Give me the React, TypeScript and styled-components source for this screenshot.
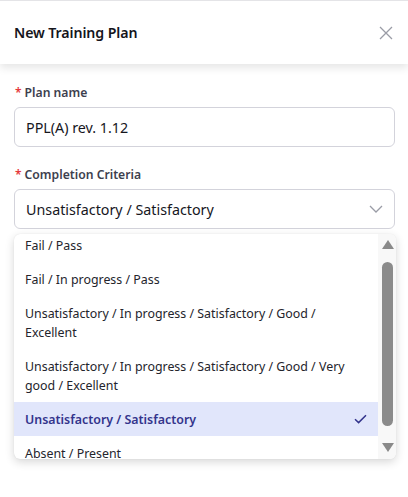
import { useLayoutEffect, useRef } from 'react'
import styled, { createGlobalStyle } from 'styled-components'

const GlobalStyle = createGlobalStyle`
  html, body {
    margin: 0;
    padding: 0;
    background: #fff;
  }
  body {
    font-family: "Segoe UI", "Noto Sans", "Open Sans", sans-serif;
    color: #1b1b1f;
  }
`

const Page = styled.div`
  width: 408px;
  height: 497px;
  background: #fff;
  overflow: hidden;
`

const Header = styled.header`
  height: 63px;
  border-top: 1px solid #e4e4e7;
  padding: 0 14px;
  display: flex;
  align-items: center;
  justify-content: space-between;
  background: #fff;
  box-shadow: 0 4px 8px rgba(0, 0, 0, 0.1);
  position: relative;
`

const Title = styled.h1`
  margin: 0;
  font-size: 14.2px;
  font-weight: 600;
  color: #15151c;
  letter-spacing: -0.1px;
`

const CloseBtn = styled.button`
  border: 0;
  background: none;
  padding: 0;
  width: 16px;
  height: 16px;
  display: flex;
  align-items: center;
  justify-content: center;
  cursor: pointer;
`

const Form = styled.div`
  padding: 20px 13px 0 14px;
  display: flex;
  flex-direction: column;
`

const Field = styled.div<{ $gap?: number }>`
  display: flex;
  flex-direction: column;
  gap: 5px;
  margin-bottom: ${p => p.$gap ?? 0}px;
`

const Label = styled.label`
  display: flex;
  align-items: center;
  gap: 3px;
  font-size: 12.2px;
  font-weight: 600;
  line-height: 18px;
  color: #3d3f4e;
`

const Star = styled.span`
  color: #e5383b;
  font-size: 12px;
  margin-left: 1px;
`

const Input = styled.div`
  height: 40px;
  box-sizing: border-box;
  border: 1px solid #d3d3db;
  border-radius: 6px;
  padding: 0 11px;
  display: flex;
  align-items: center;
  justify-content: space-between;
  font-size: 14.3px;
  color: #16161d;
`

const Dropdown = styled.div`
  margin-top: 5px;
  margin-right: -1px;
  height: 225px;
  display: flex;
  border-radius: 6px;
  background: #fff;
  box-shadow: 0 3px 10px rgba(0, 0, 0, 0.16), 0 0 1px rgba(0, 0, 0, 0.12);
  overflow: hidden;
`

const List = styled.ul`
  flex: 1;
  margin: 0;
  padding: 0;
  list-style: none;
  overflow: hidden;
`

const Item = styled.li<{ $selected?: boolean }>`
  padding: 7.5px 11px;
  display: flex;
  align-items: center;
  justify-content: space-between;
  gap: 12px;
  font-size: 12.4px;
  line-height: 19px;
  color: ${p => (p.$selected ? '#33348c' : '#24242c')};
  font-weight: ${p => (p.$selected ? 600 : 400)};
  background: ${p => (p.$selected ? '#e1e6fb' : 'transparent')};
`

const ItemText = styled.span`
  max-width: 332px;
`

const ScrollTrack = styled.div`
  width: 18px;
  background: #f8f8f8;
  display: flex;
  flex-direction: column;
  align-items: center;
  padding: 6px 0 6px;
  box-sizing: border-box;
`

const Arrow = styled.div<{ $down?: boolean }>`
  width: 0;
  height: 0;
  border-left: 6.5px solid transparent;
  border-right: 6.5px solid transparent;
  ${p =>
    p.$down
      ? 'border-top: 9px solid #8a8a8a;'
      : 'border-bottom: 9px solid #8a8a8a;'}
  margin-left: 1px;
`

const Thumb = styled.div`
  width: 11px;
  height: 164px;
  margin: 13px 0 17px 1px;
  border-radius: 6px;
  background: #8b8b8b;
`

const options = [
  'Fail / Pass',
  'Fail / In progress / Pass',
  'Unsatisfactory / In progress / Satisfactory / Good / Excellent',
  'Unsatisfactory / In progress / Satisfactory / Good / Very good / Excellent',
  'Unsatisfactory / Satisfactory',
  'Absent / Present',
]

const selected = 'Unsatisfactory / Satisfactory'

const CloseIcon = () => (
  <svg width="14" height="14" viewBox="0 0 14 14" fill="none">
    <path d="M1 1L13 13M13 1L1 13" stroke="#9a9ca6" strokeWidth="1.3" />
  </svg>
)

const Chevron = () => (
  <svg width="14" height="8" viewBox="0 0 14 8" fill="none">
    <path d="M1 1L7 7L13 1" stroke="#9a9ca6" strokeWidth="1.3" />
  </svg>
)

const Check = () => (
  <svg width="13" height="10" viewBox="0 0 13 10" fill="none">
    <path d="M1 5.2L4.6 8.6L12 1.2" stroke="#33348c" strokeWidth="1.5" />
  </svg>
)

export default function App() {
  const listRef = useRef<HTMLUListElement>(null)

  useLayoutEffect(() => {
    if (listRef.current) listRef.current.scrollTop = 6
  }, [])

  return (
    <Page>
      <GlobalStyle />
      <Header>
        <Title>New Training Plan</Title>
        <CloseBtn aria-label="Close">
          <CloseIcon />
        </CloseBtn>
      </Header>
      <Form>
        <Field $gap={19}>
          <Label>
            <Star>*</Star>Plan name
          </Label>
          <Input>PPL(A) rev. 1.12</Input>
        </Field>
        <Field>
          <Label>
            <Star>*</Star>Completion Criteria
          </Label>
          <Input>
            {selected}
            <Chevron />
          </Input>
        </Field>
        <Dropdown>
          <List ref={listRef}>
            {options.map(o => (
              <Item key={o} $selected={o === selected}>
                <ItemText>{o}</ItemText>
                {o === selected && <Check />}
              </Item>
            ))}
          </List>
          <ScrollTrack>
            <Arrow />
            <Thumb />
            <Arrow $down />
          </ScrollTrack>
        </Dropdown>
      </Form>
    </Page>
  )
}
